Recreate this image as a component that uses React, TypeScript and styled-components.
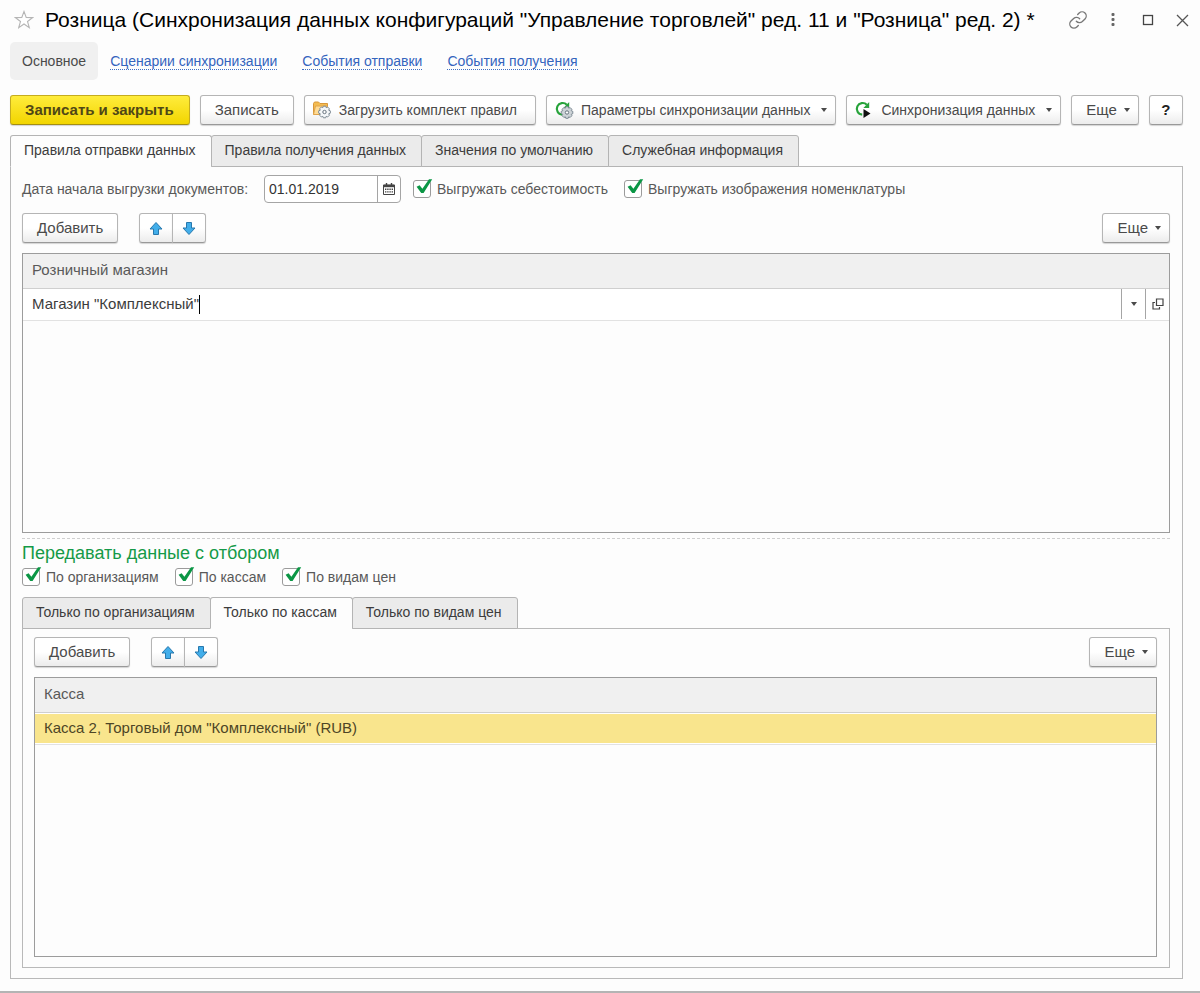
import React, { useState } from "react";
import styled, { createGlobalStyle, css } from "styled-components";

const GlobalStyle = createGlobalStyle`
  *, *::before, *::after { box-sizing: border-box; }
  body { margin: 0; background: #fdfdfd; }
  body, button, input {
    font-family: "Liberation Sans", Arial, sans-serif;
    font-size: 14px;
    line-height: 18px;
    color: #4a4a4a;
  }
`;

const Window = styled.div`
  padding-bottom: 12px;
  border-bottom: 2px solid #b4b4b4;
`;

const TitleBar = styled.header`
  display: flex;
  align-items: center;
  height: 40px;
  padding: 0 6px 0 12px;
`;

const Title = styled.h1`
  flex: 1;
  margin: 0 0 0 10px;
  font-size: 21px;
  line-height: 24px;
  font-weight: 400;
  color: #000;
  white-space: nowrap;
`;

const WindowActions = styled.div`
  display: flex;
  gap: 12px;
`;

const IconButton = styled.button`
  display: flex;
  align-items: center;
  justify-content: center;
  width: 23px;
  height: 24px;
  padding: 0;
  border: 0;
  background: none;
`;

const Content = styled.main`
  padding: 0 17px 0 10px;
`;

const Nav = styled.nav`
  display: flex;
  align-items: center;
  gap: 25px;
  height: 42px;
`;

const CurrentPage = styled.span`
  margin-right: -13px;
  padding: 10px 12px;
  border-radius: 5px;
  background: #f0f0f0;
  color: #4a4a4a;
`;

const NavLink = styled.a`
  height: 18px;
  border-bottom: 1px dotted #3f6fc4;
  color: #3464bd;
  text-decoration: none;
`;

const CommandBar = styled.div`
  display: flex;
  gap: 10px;
  padding: 13px 0 10px;
`;

const Button = styled.button<{ $primary?: boolean }>`
  display: inline-flex;
  flex-shrink: 0;
  align-items: center;
  justify-content: center;
  height: 30px;
  padding: 0 14px;
  border: 1px solid #b5b5b5;
  border-bottom-color: #999;
  border-radius: 3px;
  background: linear-gradient(#fff 50%, #ececec);
  box-shadow: 0 1px 1px #d4d4d4;
  font-size: 15px;
  white-space: nowrap;
  ${(p) =>
    p.$primary &&
    css`
      padding: 0 15px 0 14px;
      border-color: #c5ac1f;
      border-bottom-color: #a48e13;
      background: linear-gradient(#ffec3c, #f2d500);
      color: #4f4716;
      font-weight: 700;
    `}
`;

const Caret = styled.span`
  width: 0;
  border: 3px solid transparent;
  border-top: 4px solid #4a4a4a;
  border-bottom: 0;
`;

const IconCommand = styled(Button)`
  padding: 0 18px 0 7px;
  gap: 7px;
  font-size: 14px;
`;

const MenuCommand = styled(IconCommand)`
  padding-right: 8px;
  ${Caret} { margin-left: 4px; }
`;

const MoreButton = styled(Button)`
  gap: 7px;
  padding: 0 8px 0 14px;
`;

const HelpButton = styled(Button)`
  width: 34px;
  padding: 0;
  color: #222;
  font-weight: 700;
`;

const TabList = styled.div`
  display: flex;
`;

const Tab = styled.button<{ $active: boolean }>`
  height: 32px;
  margin: 0 0 -1px -1px;
  padding: 0 15px 2px 13px;
  border: 1px solid #b4b4b4;
  border-bottom-color: ${(p) => (p.$active ? "#fdfdfd" : "#b4b4b4")};
  border-radius: 3px 3px 0 0;
  background: ${(p) => (p.$active ? "#fdfdfd" : "#ebebeb")};
  color: #3c3c3c;
  white-space: nowrap;
  &:first-child { margin-left: 0; }
`;

const Panel = styled.section`
  border: 1px solid #b9b9b9;
  padding: 8px 12px 10px 11px;
`;

const FieldRow = styled.div`
  display: flex;
  align-items: center;
  gap: 12px;
`;

const FieldLabel = styled.label`
  min-width: 236px;
  margin-right: -6px;
  color: #595959;
  white-space: nowrap;
`;

const DateBox = styled.div`
  display: flex;
  width: 137px;
  height: 28px;
  border: 1px solid #a5a5a5;
  border-radius: 4px;
  background: #fff;
`;

const DateInput = styled.input`
  flex: 1;
  min-width: 0;
  padding: 0 4px;
  border: 0;
  background: none;
  color: #333;
`;

const CalendarButton = styled(IconButton)`
  height: 26px;
  border-left: 1px solid #a5a5a5;
`;

const CheckLabel = styled.label`
  display: inline-flex;
  align-items: center;
  gap: 6px;
  margin-right: 4px;
  color: #595959;
  white-space: nowrap;
`;

const CheckBox = styled.span`
  position: relative;
  display: flex;
  width: 18px;
  height: 18px;
  svg {
    position: absolute;
    left: 2px;
    top: -2px;
    pointer-events: none;
  }
`;

const CheckInput = styled.input`
  appearance: none;
  width: 18px;
  height: 18px;
  margin: 0;
  border: 1px solid #9b9b9b;
  border-radius: 3px;
  background: #fff;
  &:not(:checked) + svg { display: none; }
`;

const ListToolbar = styled.div`
  display: flex;
  justify-content: space-between;
  padding: 10px 0;
`;

const SubToolbar = styled(ListToolbar)`
  padding-top: 0;
`;

const ToolGroup = styled.div`
  display: flex;
  gap: 21px;
`;

const MovePair = styled.div`
  display: flex;
`;

const MoveButton = styled(Button)`
  width: 34px;
  padding: 0;
  &:first-child { border-radius: 3px 0 0 3px; }
  &:last-child { margin-left: -1px; border-radius: 0 3px 3px 0; }
`;

const ListBox = styled.div`
  min-height: 280px;
  border: 1px solid #9c9c9c;
`;

const Table = styled.table`
  width: 100%;
  border-collapse: collapse;
  font-size: 15px;
`;

const HeadCell = styled.th`
  height: 34px;
  padding: 0 9px 1px;
  border-bottom: 1px solid #cfcfcf;
  background: #f0f0f0;
  color: #595959;
  font-weight: 400;
  text-align: left;
`;

const Cell = styled.td<{ $selected?: boolean }>`
  height: 32px;
  padding: 0 0 0 9px;
  border-bottom: 1px solid #e2e2e2;
  background: ${(p) => (p.$selected ? "#f9e58d" : "#fff")};
  box-shadow: ${(p) => (p.$selected ? "inset 0 1px #fff, inset 0 -1px #fff" : "none")};
  color: ${(p) => (p.$selected ? "#4d4526" : "#3c3c3c")};
`;

const CellEditor = styled.div`
  display: flex;
  align-items: center;
`;

const CellInput = styled.input`
  field-sizing: content;
  padding: 0;
  border: 0;
  background: none;
  font-size: 15px;
  color: #3c3c3c;
  outline: 0;
`;

const TextCursor = styled.span`
  width: 1px;
  height: 19px;
  margin-right: auto;
  background: #000;
`;

const CellButton = styled(IconButton)`
  width: 24px;
  height: 30px;
  border-left: 1px solid #a5a5a5;
`;

const FilterSection = styled.section`
  margin-top: 5px;
  border-top: 1px dashed #cfcfcf;
`;

const FilterTitle = styled.h2`
  margin: 3px 0 4px;
  font-size: 18px;
  line-height: 22px;
  font-weight: 400;
  color: #159a48;
`;

const FilterChecks = styled(FieldRow)`
  margin-bottom: 11px;
`;

function Check({ label }: { label: string }) {
  return (
    <CheckLabel>
      <CheckBox>
        <CheckInput type="checkbox" defaultChecked />
        <svg width="18" height="17" viewBox="0 0 18 17">
          <path d="M1.6 8.8 L4.6 7.3 L7.4 10.8 L14 1.2 L17.2 1.2 L8.6 15 L6.2 15 Z" fill="#0b9645" />
        </svg>
      </CheckBox>
      {label}
    </CheckLabel>
  );
}

function Arrow({ down }: { down?: boolean }) {
  return (
    <svg width="14" height="15" viewBox="0 0 14 15">
      <path
        d={down ? "M4.5 1.5h5v5.5h3.5L7 13.5 1 7h3.5z" : "M4.5 13.5h5V8H13L7 1.5 1 8h3.5z"}
        fill="#42aeea"
        stroke="#2878ad"
        strokeLinejoin="round"
      />
    </svg>
  );
}

function Gear({ x, y, fill }: { x: number; y: number; fill: string }) {
  return (
    <g transform={`translate(${x} ${y})`}>
      <path
        d="M-1.2-5.8h2.4l.5 1.5 1.4-.7 1.8 1.8-.7 1.4 1.6.6v2.4l-1.6.6.7 1.4-1.8 1.8-1.4-.7-.5 1.5h-2.4l-.5-1.5-1.4.7-1.8-1.8.7-1.4-1.6-.6v-2.4l1.6-.6-.7-1.4 1.8-1.8 1.4.7z"
        fill={fill}
        stroke="#7d8a94"
        strokeLinejoin="round"
      />
      <circle r="1.7" fill="#fff" stroke="#66737d" />
    </g>
  );
}

function FolderIcon() {
  return (
    <svg width="20" height="20" viewBox="0 0 20 20">
      <path d="M1.5 14.5V3.5l1-1.5h4l1.5 1.5h7.5v5" fill="#f4bc50" stroke="#d8973a" />
      <path d="M1.5 14.5l2-8.5h12l-2 8.5z" fill="#ffdb94" stroke="#e0a54c" />
      <Gear x={12.5} y={12} fill="#f4f7f9" />
    </svg>
  );
}

function SyncIcon({ run }: { run?: boolean }) {
  return (
    <svg width="20" height="20" viewBox="0 0 20 20">
      <path d="M12.8 4.8A5.8 5.8 0 1 0 8.2 14.6" fill="none" stroke="#27a33b" strokeWidth="2.2" />
      <path d="M15.2 2v6H9.4z" fill="#27a33b" />
      {run ? <path d="M9.5 9v9l7-4.5z" fill="#111" /> : <Gear x={13} y={12.5} fill="#cdd3d7" />}
    </svg>
  );
}

function MoveButtons() {
  return (
    <MovePair>
      <MoveButton aria-label="Вверх"><Arrow /></MoveButton>
      <MoveButton aria-label="Вниз"><Arrow down /></MoveButton>
    </MovePair>
  );
}

function Toolbar({ as: Bar }: { as: typeof ListToolbar }) {
  return (
    <Bar>
      <ToolGroup>
        <Button>Добавить</Button>
        <MoveButtons />
      </ToolGroup>
      <MoreButton>Еще<Caret /></MoreButton>
    </Bar>
  );
}

function Tabs({ items, initial }: { items: string[]; initial: number }) {
  const [active, setActive] = useState(initial);
  return (
    <TabList role="tablist">
      {items.map((item, i) => (
        <Tab key={item} role="tab" aria-selected={i === active} $active={i === active} onClick={() => setActive(i)}>
          {item}
        </Tab>
      ))}
    </TabList>
  );
}

export default function App() {
  return (
    <Window>
      <GlobalStyle />
      <TitleBar>
        <IconButton aria-label="В избранное">
          <svg width="20" height="20" viewBox="0 0 20 20">
            <path
              d="M10 1.5l2.2 5.9 6.3.2-5 3.9 1.8 6.1L10 14l-5.3 3.6 1.8-6.1-5-3.9 6.3-.2z"
              fill="#fff"
              stroke="#b5b5b5"
              strokeWidth="1.1"
            />
          </svg>
        </IconButton>
        <Title>Розница (Синхронизация данных конфигураций "Управление торговлей" ред. 11 и "Розница" ред. 2) *</Title>
        <WindowActions>
          <IconButton aria-label="Ссылка">
            <svg width="20" height="20" viewBox="0 0 24 24" fill="none" stroke="#777" strokeWidth="1.6" strokeLinecap="round">
              <path d="M10 13.5a5 5 0 0 0 7.2.4l3.2-3.2a4.9 4.9 0 0 0-7-7l-1.8 1.8" />
              <path d="M14 10.5a5 5 0 0 0-7.2-.4l-3.2 3.2a4.9 4.9 0 0 0 7 7l1.8-1.8" />
            </svg>
          </IconButton>
          <IconButton aria-label="Меню">
            <svg width="4" height="14" viewBox="0 0 4 14" fill="#666">
              <rect width="3" height="3" y="0" x="0.5" rx="1" />
              <rect width="3" height="3" y="5" x="0.5" rx="1" />
              <rect width="3" height="3" y="10" x="0.5" rx="1" />
            </svg>
          </IconButton>
          <IconButton aria-label="Развернуть">
            <svg width="12" height="12" viewBox="0 0 12 12">
              <rect x="1.5" y="1.5" width="9" height="9" fill="none" stroke="#444" strokeWidth="1.3" />
            </svg>
          </IconButton>
          <IconButton aria-label="Закрыть">
            <svg width="13" height="13" viewBox="0 0 13 13">
              <path d="M1 1l11 11M12 1L1 12" stroke="#555" strokeWidth="1.3" />
            </svg>
          </IconButton>
        </WindowActions>
      </TitleBar>

      <Content>
        <Nav>
          <CurrentPage>Основное</CurrentPage>
          <NavLink href="#scenarios">Сценарии синхронизации</NavLink>
          <NavLink href="#sent">События отправки</NavLink>
          <NavLink href="#received">События получения</NavLink>
        </Nav>

        <CommandBar>
          <Button $primary>Записать и закрыть</Button>
          <Button>Записать</Button>
          <IconCommand><FolderIcon />Загрузить комплект правил</IconCommand>
          <MenuCommand><SyncIcon />Параметры синхронизации данных<Caret /></MenuCommand>
          <MenuCommand><SyncIcon run />Синхронизация данных<Caret /></MenuCommand>
          <MoreButton>Еще<Caret /></MoreButton>
          <HelpButton aria-label="Справка">?</HelpButton>
        </CommandBar>

        <Tabs
          initial={0}
          items={["Правила отправки данных", "Правила получения данных", "Значения по умолчанию", "Служебная информация"]}
        />
        <Panel>
          <FieldRow>
            <FieldLabel htmlFor="start-date">Дата начала выгрузки документов:</FieldLabel>
            <DateBox>
              <DateInput id="start-date" defaultValue="01.01.2019" />
              <CalendarButton aria-label="Выбрать дату">
                <svg width="12" height="12" viewBox="0 0 12 12">
                  <path d="M0.5 2h11v9.5h-11z" fill="#fff" stroke="#444" />
                  <path d="M0.5 3h11" stroke="#444" strokeWidth="2.4" />
                  <path d="M3.5 0v2M8.5 0v2" stroke="#444" strokeWidth="1.4" />
                  <path d="M2 6.2h8M2 8.9h8" stroke="#444" strokeWidth="1.4" strokeDasharray="1.4 0.8" />
                </svg>
              </CalendarButton>
            </DateBox>
            <Check label="Выгружать себестоимость" />
            <Check label="Выгружать изображения номенклатуры" />
          </FieldRow>

          <Toolbar as={ListToolbar} />
          <ListBox>
            <Table>
              <thead><tr><HeadCell>Розничный магазин</HeadCell></tr></thead>
              <tbody>
                <tr>
                  <Cell>
                    <CellEditor>
                      <CellInput aria-label="Розничный магазин" defaultValue={'Магазин "Комплексный"'} />
                      <TextCursor />
                      <CellButton aria-label="Выбрать из списка"><Caret /></CellButton>
                      <CellButton aria-label="Открыть">
                        <svg width="12" height="12" viewBox="0 0 12 12" fill="none" stroke="#444" strokeWidth="1.2">
                          <path d="M4.5 1h6.5v6.5H4.5z" />
                          <path d="M3 4.5H1V11h6.5V9" />
                        </svg>
                      </CellButton>
                    </CellEditor>
                  </Cell>
                </tr>
              </tbody>
            </Table>
          </ListBox>

          <FilterSection>
            <FilterTitle>Передавать данные с отбором</FilterTitle>
            <FilterChecks>
              <Check label="По организациям" />
              <Check label="По кассам" />
              <Check label="По видам цен" />
            </FilterChecks>
            <Tabs initial={1} items={["Только по организациям", "Только по кассам", "Только по видам цен"]} />
            <Panel>
              <Toolbar as={SubToolbar} />
              <ListBox>
                <Table>
                  <thead><tr><HeadCell>Касса</HeadCell></tr></thead>
                  <tbody>
                    <tr><Cell $selected>Касса 2, Торговый дом "Комплексный" (RUB)</Cell></tr>
                  </tbody>
                </Table>
              </ListBox>
            </Panel>
          </FilterSection>
        </Panel>
      </Content>
    </Window>
  );
}
